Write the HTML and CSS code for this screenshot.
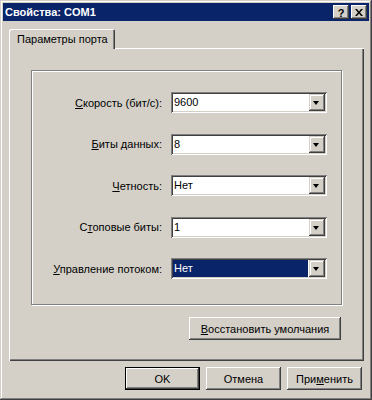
FILE: index.html
```html
<!DOCTYPE html>
<html lang="ru">
<head>
  <meta charset="UTF-8" />
  <title>Свойства: COM1</title>
  <link rel="stylesheet" href="styles.css">
</head>
<body>

  <div class="window">
    <div class="titlebar">
      <span class="title">Свойства: COM1</span>
      <div class="title-buttons">
        <span class="tbtn help">?</span>
        <span class="tbtn close">
          <svg width="8" height="7" viewBox="0 0 8 7">
            <path d="M0 0h2l2 2.5L6 0h2L5 3.5 8 7H6L4 4.5 2 7H0l3-3.5z" fill="#000"/>
          </svg>
        </span>
      </div>
    </div>

    <div class="content">
      <div class="tabs">
        <div class="tab">Параметры порта</div>
      </div>

      <div class="panel">
        <div class="group">
          <label class="lbl"><u>С</u>корость (бит/с):</label>
          <div class="combo"><span class="value">9600</span><span class="drop"></span></div>

          <label class="lbl"><u>Б</u>иты данных:</label>
          <div class="combo"><span class="value">8</span><span class="drop"></span></div>

          <label class="lbl"><u>Ч</u>етность:</label>
          <div class="combo"><span class="value">Нет</span><span class="drop"></span></div>

          <label class="lbl">С<u>т</u>оповые биты:</label>
          <div class="combo"><span class="value">1</span><span class="drop"></span></div>

          <label class="lbl"><u>У</u>правление потоком:</label>
          <div class="combo focused"><span class="value">Нет</span><span class="drop"></span></div>
        </div>

        <div class="restore-row">
          <button class="btn restore"><u>В</u>осстановить умолчания</button>
        </div>
      </div>

      <div class="footer">
        <button class="btn default">OK</button>
        <button class="btn">Отмена</button>
        <button class="btn">При<u>м</u>енить</button>
      </div>
    </div>
  </div>

</body>
</html>
```

FILE: styles.css
```css
* {
  box-sizing: border-box;
}

body {
  margin: 0;
  background: #d4d0c8;
  font-family: "Liberation Sans", Arial, sans-serif;
  font-size: 11px;
  color: #000;
}

u {
  text-decoration: underline;
  text-underline-offset: 1px;
}

.window {
  width: 372px;
  height: 400px;
  padding: 3px;
  background: #d4d0c8;
  box-shadow: inset -1px -1px #404040, inset 1px 1px #d4d0c8,
              inset -2px -2px #808080, inset 2px 2px #fff;
}

/* title bar */
.titlebar {
  height: 18px;
  background: #0a246a;
  display: flex;
  align-items: center;
  justify-content: space-between;
  padding: 0 2px 0 2px;
}

.title {
  color: #fff;
  font-weight: bold;
  font-size: 11px;
}

.title-buttons {
  display: flex;
  gap: 2px;
}

.tbtn {
  width: 16px;
  height: 14px;
  background: #d4d0c8;
  display: flex;
  align-items: center;
  justify-content: center;
  box-shadow: inset -1px -1px #404040, inset 1px 1px #fff,
              inset -2px -2px #808080;
}

.tbtn.help {
  font-weight: bold;
  font-size: 11px;
  line-height: 14px;
  padding-top: 1px;
}

.tbtn.close svg {
  margin-top: 1px;
}

/* body */
.content {
  padding: 8px 5px 0 6px;
}

.tabs {
  display: flex;
  height: 19px;
  padding-left: 0;
}

.tab {
  position: relative;
  z-index: 1;
  width: 106px;
  height: 20px;
  padding: 4px 0 0 8px;
  background: #d4d0c8;
  border-radius: 2px 2px 0 0;
  box-shadow: inset 1px 1px #fff, inset -1px 0 #404040, inset -2px 0 #808080;
}

.panel {
  height: 313px;
  padding: 22px 22px 0 22px;
  box-shadow: inset 1px 1px #fff, inset -1px -1px #404040, inset -2px -2px #808080;
}

.group {
  height: 235px;
  border: 1px solid #808080;
  box-shadow: inset 1px 1px #fff, 1px 1px #fff;
  display: grid;
  grid-template-columns: 130px 156px;
  grid-auto-rows: 21px;
  column-gap: 9px;
  row-gap: 20.5px;
  padding: 21px 0 0 0;
  align-items: center;
}

.lbl {
  text-align: right;
  white-space: nowrap;
}

/* combo box */
.combo {
  height: 21px;
  background: #fff;
  display: flex;
  padding: 2px;
  box-shadow: inset 1px 1px #808080, inset -1px -1px #fff,
              inset 2px 2px #404040, inset -2px -2px #d4d0c8;
}

.combo .value {
  flex: 1;
  padding: 2px 0 0 1px;
  margin-right: 1px;
  line-height: 13px;
}

.combo.focused .value {
  background: #0a246a;
  color: #fff;
}

.combo .drop {
  width: 16px;
  height: 17px;
  background: #d4d0c8;
  position: relative;
  box-shadow: inset -1px -1px #404040, inset 1px 1px #d4d0c8,
              inset -2px -2px #808080, inset 2px 2px #fff;
}

.combo .drop::after {
  content: '';
  position: absolute;
  left: 4px;
  top: 7px;
  border-left: 3.5px solid transparent;
  border-right: 3.5px solid transparent;
  border-top: 4px solid #000;
}

/* buttons */
.btn {
  width: 75px;
  height: 23px;
  margin: 0;
  padding: 0;
  border: none;
  background: #d4d0c8;
  font-family: "Liberation Sans", Arial, sans-serif;
  font-size: 11px;
  color: #000;
  box-shadow: inset -1px -1px #404040, inset 1px 1px #fff,
              inset -2px -2px #808080, inset 2px 2px #d4d0c8;
}

.btn.default {
  border: 1px solid #000;
  box-shadow: inset -1px -1px #404040, inset 1px 1px #fff,
              inset -2px -2px #808080;
}

.restore-row {
  display: flex;
  justify-content: flex-end;
  padding-right: 1px;
  margin-top: 12px;
}

.btn.restore {
  width: 152px;
}

.footer {
  display: flex;
  justify-content: flex-end;
  gap: 6px;
  margin-top: 6px;
  padding-right: 2px;
}
```
